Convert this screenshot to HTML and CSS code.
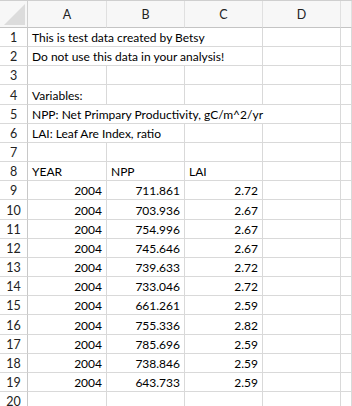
FILE: index.html
```html
<!DOCTYPE html>
<html lang="en">
<head>
  <meta charset="UTF-8">
  <meta name="viewport" content="width=device-width, initial-scale=1.0">
  <title>Test data</title>
  <link rel="stylesheet" href="styles.css">
</head>
<body>
  <div class="sheet">
    <div class="corner"><span class="tri"></span></div>
    <div class="colhead">A</div>
    <div class="colhead">B</div>
    <div class="colhead">C</div>
    <div class="colhead">D</div>
    <div class="colhead"></div>

    <div class="rowhead">1</div>
    <div class="cell span3">This is test data created by Betsy</div>
    <div class="cell"></div><div class="cell"></div>

    <div class="rowhead">2</div>
    <div class="cell span3">Do not use this data in your analysis!</div>
    <div class="cell"></div><div class="cell"></div>

    <div class="rowhead">3</div>
    <div class="cell"></div><div class="cell"></div><div class="cell"></div><div class="cell"></div><div class="cell"></div>

    <div class="rowhead">4</div>
    <div class="cell">Variables:</div>
    <div class="cell"></div><div class="cell"></div><div class="cell"></div><div class="cell"></div>

    <div class="rowhead">5</div>
    <div class="cell span4">NPP: Net Primpary Productivity, gC/m^2/yr</div>
    <div class="cell"></div>

    <div class="rowhead">6</div>
    <div class="cell span2">LAI: Leaf Are Index, ratio</div>
    <div class="cell"></div><div class="cell"></div><div class="cell"></div>

    <div class="rowhead">7</div>
    <div class="cell"></div><div class="cell"></div><div class="cell"></div><div class="cell"></div><div class="cell"></div>

    <div class="rowhead">8</div>
    <div class="cell">YEAR</div><div class="cell">NPP</div><div class="cell">LAI</div><div class="cell"></div><div class="cell"></div>

    <div class="rowhead">9</div>
    <div class="cell num">2004</div><div class="cell num">711.861</div><div class="cell num">2.72</div><div class="cell"></div><div class="cell"></div>
    <div class="rowhead">10</div>
    <div class="cell num">2004</div><div class="cell num">703.936</div><div class="cell num">2.67</div><div class="cell"></div><div class="cell"></div>
    <div class="rowhead">11</div>
    <div class="cell num">2004</div><div class="cell num">754.996</div><div class="cell num">2.67</div><div class="cell"></div><div class="cell"></div>
    <div class="rowhead">12</div>
    <div class="cell num">2004</div><div class="cell num">745.646</div><div class="cell num">2.67</div><div class="cell"></div><div class="cell"></div>
    <div class="rowhead">13</div>
    <div class="cell num">2004</div><div class="cell num">739.633</div><div class="cell num">2.72</div><div class="cell"></div><div class="cell"></div>
    <div class="rowhead">14</div>
    <div class="cell num">2004</div><div class="cell num">733.046</div><div class="cell num">2.72</div><div class="cell"></div><div class="cell"></div>
    <div class="rowhead">15</div>
    <div class="cell num">2004</div><div class="cell num">661.261</div><div class="cell num">2.59</div><div class="cell"></div><div class="cell"></div>
    <div class="rowhead">16</div>
    <div class="cell num">2004</div><div class="cell num">755.336</div><div class="cell num">2.82</div><div class="cell"></div><div class="cell"></div>
    <div class="rowhead">17</div>
    <div class="cell num">2004</div><div class="cell num">785.696</div><div class="cell num">2.59</div><div class="cell"></div><div class="cell"></div>
    <div class="rowhead">18</div>
    <div class="cell num">2004</div><div class="cell num">738.846</div><div class="cell num">2.59</div><div class="cell"></div><div class="cell"></div>
    <div class="rowhead">19</div>
    <div class="cell num">2004</div><div class="cell num">643.733</div><div class="cell num">2.59</div><div class="cell"></div><div class="cell"></div>

    <div class="rowhead">20</div>
    <div class="cell"></div><div class="cell"></div><div class="cell"></div><div class="cell"></div><div class="cell"></div>
  </div>
</body>
</html>
```

FILE: styles.css
```css
html, body { margin: 0; padding: 0; background: #fff; overflow: hidden; }
body { font-family: "Lato", "Liberation Sans", sans-serif; font-size: 12px; color: #000; }

.sheet {
  display: grid;
  grid-template-columns: 28px 79px 78px 78px 78px minmax(0, 1fr);
  grid-template-rows: 27px;
  grid-auto-rows: 19.16px;
  width: 352px;
  height: 406px;
  overflow: hidden;
  border-top: 1px solid #cfcfcf;
  box-sizing: border-box;
}

.corner, .colhead { background: #f7f7f7; border-bottom: 1px solid #c4c4c4; box-sizing: border-box; }
.corner { position: relative; border-right: 1px solid #d0d0d0; }
.tri { position: absolute; right: 2px; bottom: 2px; width: 0; height: 0; border-left: 21px solid transparent; border-bottom: 21px solid #dcdcdc; }

.colhead {
  border-right: 1px solid #e0e0e0;
  display: flex; align-items: center; justify-content: center;
  font-size: 12.5px; color: #222;
}

.rowhead, .cell {
  box-sizing: border-box;
  border-bottom: 1px solid #d9d9d9;
  display: flex; align-items: flex-end;
  line-height: 15px;
  padding-bottom: 1px;
  white-space: nowrap;
  overflow: hidden;
}
.rowhead { border-right: 1px solid #c8c8c8; justify-content: center; color: #222; font-size: 12.5px; }
.cell { border-right: 1px solid #d9d9d9; padding-left: 4px; padding-right: 4px; }
.num { justify-content: flex-end; }
.span2 { grid-column: span 2; }
.span3 { grid-column: span 3; }
.span4 { grid-column: span 4; }
```
